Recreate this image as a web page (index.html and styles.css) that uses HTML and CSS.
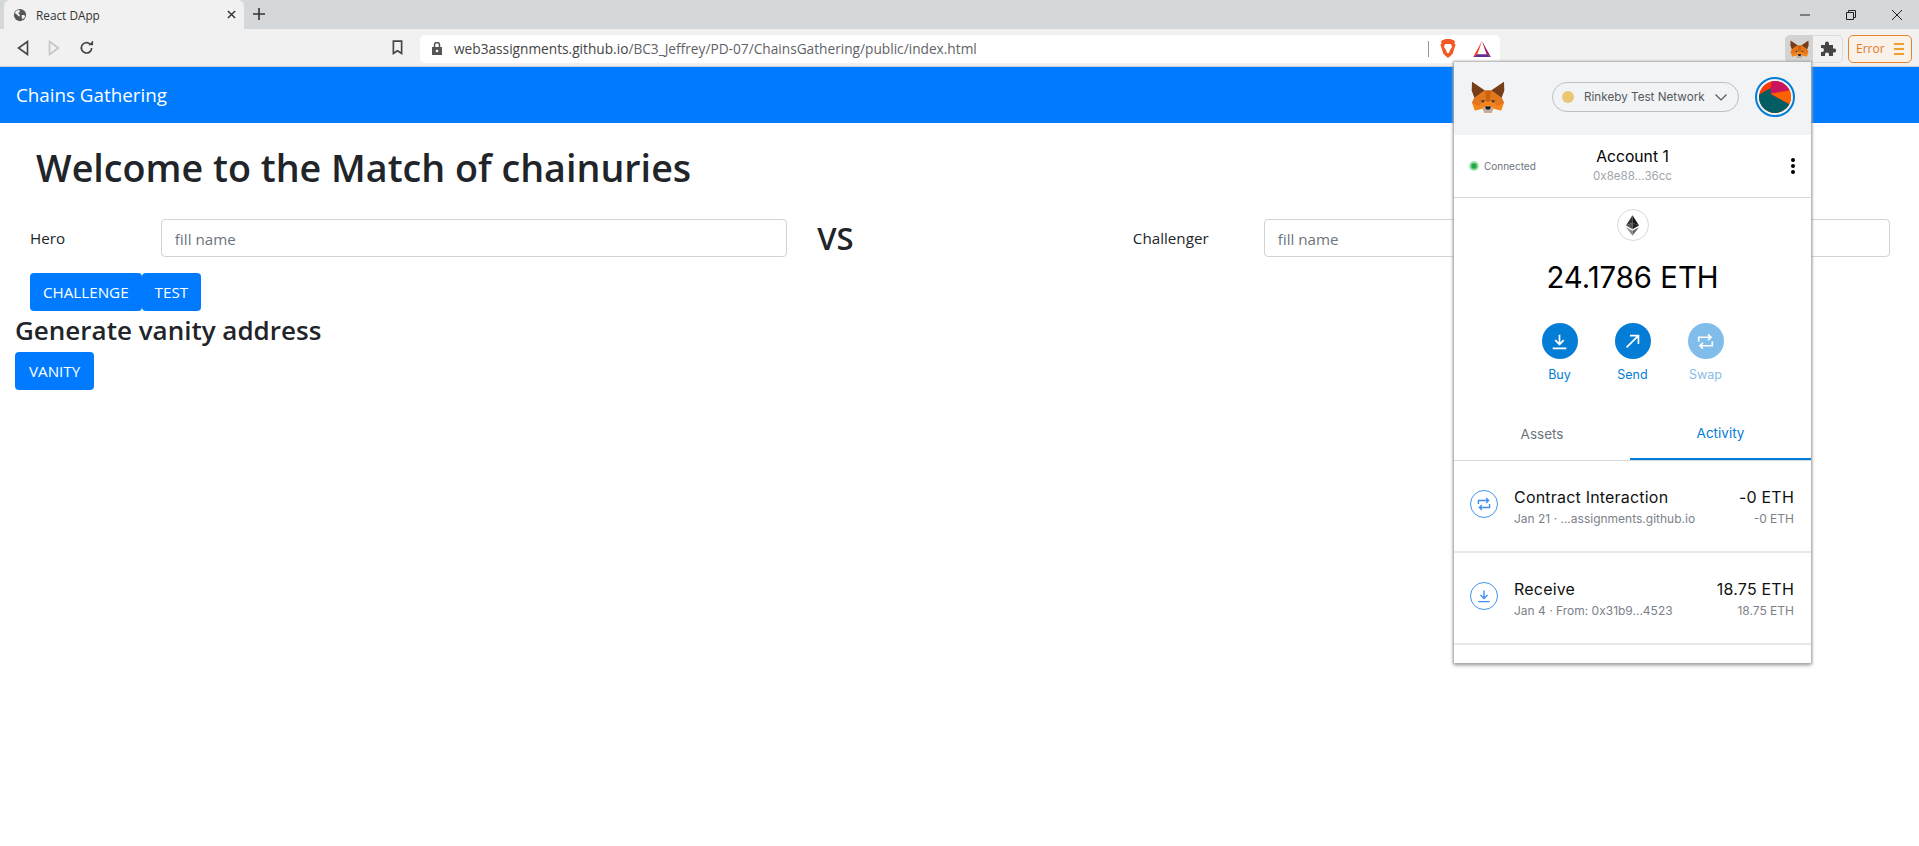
FILE: index.html
```html
<!DOCTYPE html>
<html lang="en">
<head>
<meta charset="utf-8">
<title>React DApp</title>
<link rel="stylesheet" href="styles.css">
</head>
<body>
<svg class="defs" width="0" height="0" aria-hidden="true">
  <symbol id="fox" viewBox="0 0 100 94">
    <polygon fill="#f6851b" points="10,50 26,38 41,28 59,28 74,38 90,50 97,64 89,87 66,81 60,93 40,93 34,81 11,87 3,64"/>
    <polygon fill="#763d16" points="3,2 41,28 26,38 10,50 2,28"/>
    <polygon fill="#763d16" points="97,2 59,28 74,38 90,50 98,28"/>
    <polygon fill="#e4761b" points="26,38 41,28 44,60 30,66 10,50"/>
    <polygon fill="#e4761b" points="74,38 59,28 56,60 70,66 90,50"/>
    <polygon fill="#cd6116" points="41,28 59,28 56,60 44,60"/>
    <polygon fill="#e4751f" points="3,64 10,50 30,66 24,74"/>
    <polygon fill="#e4751f" points="97,64 90,50 70,66 76,74"/>
    <polygon fill="#233447" points="28,58 40,56 36,64"/>
    <polygon fill="#233447" points="72,58 60,56 64,64"/>
    <polygon fill="#f6851b" points="11,87 24,74 34,81"/>
    <polygon fill="#f6851b" points="89,87 76,74 66,81"/>
    <polygon fill="#c0ad9e" points="34,81 40,93 60,93 66,81 60,74 40,74"/>
    <polygon fill="#161616" points="41,75 59,75 55,84 45,84"/>
  </symbol>
  <symbol id="swap" viewBox="0 0 20 20">
    <path fill="none" stroke="currentColor" stroke-width="2" d="M2 10V5h14M13 1.500L16.500 5 13 8.500M18 10v5H4M7 11.500L3.500 15 7 18.500"/>
  </symbol>
  <symbol id="down" viewBox="0 0 20 20">
    <path fill="none" stroke="currentColor" stroke-width="2" d="M10 2v11M5 8.500l5 5 5-5M2 18h16"/>
  </symbol>
</svg>

<header class="tabstrip">
  <div class="tab">
    <svg class="globe" viewBox="0 0 16 16"><circle cx="8" cy="8" r="7" fill="#555"/><path fill="#f1f1f1" d="M4 3l3-1 1 2-2 2 2 2-1 2-3-3-2-1zM10 8l3 0 1 2-3 3-1-2z"/></svg>
    <span class="tab-title">React DApp</span>
    <svg class="tab-x" viewBox="0 0 10 10"><path d="M1 1l8 8M9 1l-8 8" stroke="#333" stroke-width="1.600"/></svg>
  </div>
  <svg class="new-tab" viewBox="0 0 12 12"><path d="M6 0v12M0 6h12" stroke="#333" stroke-width="1.600"/></svg>
  <div class="window-controls">
    <svg viewBox="0 0 10 10"><path d="M0 5h10" stroke="#222"/></svg>
    <svg viewBox="0 0 10 10"><path fill="none" stroke="#222" d="M.5 2.500h7v7h-7zM2.500 2.500v-2h7v7h-2"/></svg>
    <svg viewBox="0 0 10 10"><path d="M0 0l10 10M10 0L0 10" stroke="#222"/></svg>
  </div>
</header>

<div class="toolbar">
  <div class="nav-buttons">
    <svg viewBox="0 0 12 16"><path fill="none" stroke="#444" stroke-width="1.600" d="M10.500 1.500v13L1.500 8z"/></svg>
    <svg viewBox="0 0 12 16"><path fill="none" stroke="#c4c4c4" stroke-width="1.600" d="M1.500 1.500v13l9-6.500z"/></svg>
    <svg viewBox="0 0 16 16"><path fill="none" stroke="#444" stroke-width="1.800" d="M13.500 8.500a5.500 5.500 0 1 1-1.800-4.200"/><path fill="#444" d="M10 5.500h5v-5z"/></svg>
  </div>
  <svg class="bookmark" viewBox="0 0 12 16"><path fill="none" stroke="#444" stroke-width="1.800" d="M1.500 1h9v13.500L6 11.500l-4.500 3z"/></svg>
  <div class="omnibox">
    <svg class="lock" viewBox="0 0 10 13"><path fill="#555" d="M0 5h10v8H0z"/><path fill="none" stroke="#555" stroke-width="1.500" d="M2.500 5V3a2.500 2.500 0 0 1 5 0v2"/><circle cx="5" cy="9" r="1.300" fill="#fff"/></svg>
    <span class="url"><span class="url-host">web3assignments.github.io</span>/BC3_Jeffrey/PD-07/ChainsGathering/public/index.html</span>
    <span class="omni-sep"></span>
    <svg class="brave" viewBox="0 0 16 19"><path fill="#f15a22" d="M3 1l2.500-1h5L13 1l2 1-.500 2 1 2-3 9-4.500 4-4.500-4-3-9 1-2-.500-2z"/><path fill="#fff" d="M5 5h6l1 3-2 3-1 3H7l-1-3-2-3z"/></svg>
    <svg class="bat" viewBox="0 0 20 18"><polygon fill="#ff4724" points="10,0 0,18 5,15"/><polygon fill="#9e1f63" points="10,0 20,18 15,15"/><polygon fill="#662d91" points="0,18 20,18 15.500,15 4.500,15"/><polygon fill="#fff" points="10,5 15,14 5,14"/></svg>
  </div>
  <div class="ext-group">
    <div class="ext-fox"><svg class="fox-small"><use href="#fox"/></svg></div>
    <svg class="puzzle" viewBox="0 0 16 16"><path fill="#444" d="M1 4h4V2.500a2 2 0 0 1 4 0V4h4v3.500h1.200a2 2 0 0 1 0 4H13V15H9v-1.500a2 2 0 0 0-4 0V15H1v-4h1a2 2 0 0 0 0-4H1z"/></svg>
  </div>
  <div class="error-chip"><span>Error</span><span class="menu-lines"><i></i><i></i><i></i></span></div>
</div>

<nav class="navbar"><a class="brand">Chains Gathering</a></nav>

<main class="page">
  <h1 class="title">Welcome to the Match of chainuries</h1>
  <div class="fight-row">
    <label class="fight-label">Hero</label>
    <input class="fight-input" placeholder="fill name">
    <h2 class="versus">VS</h2>
    <label class="fight-label">Challenger</label>
    <input class="fight-input" placeholder="fill name">
  </div>
  <div class="button-row">
    <button class="btn">CHALLENGE</button><button class="btn">TEST</button>
  </div>
  <h3 class="subtitle">Generate vanity address</h3>
  <button class="btn btn-wide">VANITY</button>
</main>

<aside class="wallet">
  <div class="wallet-head">
    <svg class="fox-large"><use href="#fox"/></svg>
    <div class="network"><span class="network-dot"></span><span class="network-name">Rinkeby Test Network</span>
      <svg class="chevron" viewBox="0 0 12 7"><path fill="none" stroke="#555" stroke-width="1.200" d="M.5.500L6 6 11.500.500"/></svg></div>
    <div class="avatar"><svg viewBox="0 0 32 32"><rect width="32" height="32" fill="#f93a06"/><polygon fill="#c9155f" points="12.700,0 32,0 32,9 11,12.700"/><polygon fill="#fb6200" points="12,12.700 32,9.500 32,24"/><polygon fill="#035e64" points="0,13.700 11.700,7 11.700,13 32,24.300 32,32 0,32"/></svg></div>
  </div>
  <div class="account-row">
    <div class="connected"><span class="connected-dot"></span>Connected</div>
    <div class="account"><div class="account-name">Account 1</div><div class="account-addr">0x8e88...36cc</div></div>
    <div class="kebab"><i></i><i></i><i></i></div>
  </div>
  <div class="balance-block">
    <div class="eth-badge"><svg viewBox="0 0 16 25"><polygon fill="#343434" points="8,0 0,12.500 8,9"/><polygon fill="#141414" points="8,0 16,12.500 8,9"/><polygon fill="#555" points="0,12.500 8,17 8,9"/><polygon fill="#222" points="16,12.500 8,17 8,9"/><polygon fill="#8c8c8c" points="0,14.500 8,25 8,19"/><polygon fill="#636363" points="16,14.500 8,25 8,19"/></svg></div>
    <div class="balance">24.1786 ETH</div>
    <div class="actions">
      <div class="action"><span class="action-circle"><svg><use href="#down"/></svg></span>Buy</div>
      <div class="action"><span class="action-circle"><svg viewBox="0 0 20 20"><path fill="none" stroke="currentColor" stroke-width="2" d="M3 17L17 3M7 3h10v10"/></svg></span>Send</div>
      <div class="action action-off"><span class="action-circle"><svg><use href="#swap"/></svg></span>Swap</div>
    </div>
  </div>
  <div class="tabs"><div class="wallet-tab">Assets</div><div class="wallet-tab wallet-tab-on">Activity</div></div>
  <div class="activity">
    <svg class="activity-icon" viewBox="0 0 28 28"><circle cx="14" cy="14" r="13.500" fill="none" stroke="#3f93ea"/><svg x="7" y="7" width="14" height="14"><use href="#swap" color="#3f8ef0"/></svg></svg>
    <div class="activity-main"><div class="activity-title">Contract Interaction</div><div class="activity-sub">Jan 21 · ...assignments.github.io</div></div>
    <div class="activity-amount"><div class="activity-title">-0 ETH</div><div class="activity-sub">-0 ETH</div></div>
  </div>
  <div class="activity">
    <svg class="activity-icon" viewBox="0 0 28 28"><circle cx="14" cy="14" r="13.500" fill="none" stroke="#3f93ea"/><svg x="7" y="7" width="14" height="14"><use href="#down" color="#3f8ef0"/></svg></svg>
    <div class="activity-main"><div class="activity-title">Receive</div><div class="activity-sub">Jan 4 · From: 0x31b9...4523</div></div>
    <div class="activity-amount"><div class="activity-title">18.75 ETH</div><div class="activity-sub">18.75 ETH</div></div>
  </div>
</aside>
</body>
</html>
```
FILE: styles.css
```css
* { box-sizing: border-box; }
html, body { margin: 0; height: 100%; overflow: hidden; }
body { font-family: "Open Sans", "Noto Sans", sans-serif; color: #212529; background: #fff; font-size: 15.200px; }
.defs { position: absolute; }

.tabstrip { height: 29px; background: #d5d8db; display: flex; align-items: flex-end; position: relative; }
.tab { width: 240px; height: 29px; margin-left: 4px; background: #f1f1f1; border-radius: 6px 6px 0 0; display: flex; align-items: center; padding: 0 8px 0 9px; }
.globe { width: 14px; height: 14px; }
.tab-title { flex: 1; margin-left: 9px; font: 11.800px "Open Sans", sans-serif; color: #333; }
.tab-x { width: 9px; height: 9px; }
.new-tab { width: 12px; height: 12px; margin: 0 0 9px 9px; }
.window-controls { margin-left: auto; align-self: stretch; display: flex; align-items: center; gap: 36px; padding: 0 17px 0 0; }
.window-controls svg { width: 10px; height: 10px; }

.toolbar { height: 38px; background: #f1f1f1; border-bottom: 1px solid #cdcdcd; display: flex; align-items: center; }
.nav-buttons { display: flex; align-items: center; gap: 19px; margin-left: 17px; }
.nav-buttons svg { width: 12px; height: 16px; }
.nav-buttons svg:last-child { width: 15px; height: 15px; }
.bookmark { width: 11px; height: 15px; margin-left: 298px; }
.omnibox { width: 1080px; height: 28px; margin: 2px 0 0 17px; background: #fff; border-radius: 5px; display: flex; align-items: center; padding-left: 12px; }
.lock { width: 10px; height: 13px; }
.url { margin-left: 12px; width: 974px; font: 13.700px "Open Sans", sans-serif; color: #5f6368; white-space: nowrap; }
.url-host { color: #444; }
.omni-sep { width: 1px; height: 16px; background: #999; margin-right: 11px; }
.brave { width: 16px; height: 19px; }
.bat { width: 18px; height: 16px; margin-left: 17px; }
.ext-group { width: 58px; height: 28px; margin: 2px 0 0 285px; display: flex; align-items: center; border: 1px solid #dcdcdc; border-radius: 5px; }
.ext-fox { width: 28px; height: 28px; margin: -1px 0 -1px -1px; background: #d3d3d3; border-radius: 5px 0 0 5px; display: flex; align-items: center; justify-content: center; }
.fox-small { width: 19px; height: 18px; }
.puzzle { width: 16px; height: 16px; margin-left: 7px; }
.error-chip { width: 64px; height: 28px; margin: 2px 0 0 5px; background: #faf1e9; border: 1px solid #e8852c; border-radius: 5px; display: flex; align-items: center; justify-content: space-between; padding: 0 7px; font: 12px "Open Sans", sans-serif; color: #e07a1f; }
.menu-lines { display: flex; flex-direction: column; gap: 3px; }
.menu-lines i { display: block; width: 10px; height: 2px; background: #f0a030; }

.navbar { height: 56px; background: #007bff; display: flex; align-items: center; padding-left: 16px; }
.brand { color: #fff; font-size: 18.800px; }

.page { padding: 0 15px; }
.title { margin: 19px 0 0 21px; font-size: 37.700px; line-height: 52px; font-weight: 600; }
.fight-row { display: flex; align-items: center; margin-top: 25px; padding: 0 14px 0 15px; }
.fight-label { width: 131px; }
.fight-input { width: 627px; height: 38px; border: 1px solid #ced4da; border-radius: 4px; padding: 1px 13px 0; font: 15.200px "Open Sans", sans-serif; }
.fight-input::placeholder { color: #6c757d; }
.versus { width: 316px; margin: 0 0 0 30px; font-size: 31px; line-height: 38px; font-weight: 600; }
.button-row { margin: 16px 0 0 15px; display: flex; }
.btn { height: 38px; padding: 0 13px; border: 0; border-radius: 4px; background: #007bff; color: #fff; font: 15.200px "Open Sans", sans-serif; }
.btn-wide { padding: 0 14px; }
.subtitle { margin: 0 0 3px; font-size: 26px; line-height: 38px; font-weight: 600; }

.wallet { position: absolute; left: 1454px; top: 62px; width: 357px; height: 601px; background: #fff; box-shadow: 0 0 2px 1px #aaa, 0 2px 4px #999; font-family: Inter, "Open Sans", sans-serif; display: flex; flex-direction: column; }
.wallet-head { height: 73px; background: #f2f3f4; display: flex; align-items: center; padding: 0 16px 0 17px; }
.fox-large { width: 34px; height: 32px; margin-top: -3px; }
.network { width: 187px; height: 30px; margin: -3px 0 0 47px; border: 1px solid #bbc0c5; border-radius: 15px; display: flex; align-items: center; padding: 0 11px 0 9px; font-size: 11.700px; color: #535a61; }
.network-dot { width: 12px; height: 12px; border-radius: 50%; background: #ebc775; }
.network-name { flex: 1; margin-left: 10px; white-space: nowrap; }
.chevron { width: 12px; height: 7px; }
.avatar { width: 40px; height: 40px; margin: -3px 0 0 16px; border: 2px solid #037dd6; border-radius: 50%; padding: 2px; }
.avatar svg { display: block; width: 32px; height: 32px; border-radius: 50%; }
.account-row { height: 63px; border-bottom: 1px solid #d6d9dc; display: grid; grid-template-columns: 1fr auto 1fr; align-items: center; padding: 0 16px; }
.connected { display: flex; align-items: center; gap: 6px; font-size: 10px; color: #6a737d; white-space: nowrap; }
.connected-dot { width: 8px; height: 8px; border-radius: 50%; background: #28a745; box-shadow: 0 0 0 1px #a4e6b4; border: 1px solid #a4e6b4; }
.account { text-align: center; margin-top: -1px; }
.account-name { font-size: 15.700px; line-height: 22px; color: #000; }
.account-addr { font-size: 11.600px; line-height: 17px; color: #9fa6ae; }
.kebab { justify-self: end; width: 4px; display: flex; flex-direction: column; gap: 2px; }
.kebab i { display: block; width: 4px; height: 4px; border-radius: 50%; background: #000; }
.balance-block { height: 210px; display: flex; flex-direction: column; align-items: center; padding-top: 11px; }
.eth-badge { width: 32px; height: 32px; border: 1px solid #d6d9dc; border-radius: 50%; display: flex; align-items: center; justify-content: center; }
.eth-badge svg { width: 13px; height: 21px; }
.balance { margin-top: 15px; font-size: 29.300px; line-height: 44px; color: #000; white-space: nowrap; }
.actions { margin-top: 23px; display: flex; gap: 18px; }
.action { width: 55px; display: flex; flex-direction: column; align-items: center; gap: 8px; font-size: 12.500px; line-height: 16px; color: #037dd6; }
.action-circle { width: 36px; height: 36px; border-radius: 50%; background: #037dd6; color: #fff; display: flex; align-items: center; justify-content: center; }
.action-circle svg { width: 17px; height: 17px; }
.action-off { opacity: .5; }
.tabs { flex: none; display: grid; grid-template-columns: 176px 1fr; height: 53px; border-bottom: 1px solid #d6d9dc; }
.wallet-tab { display: flex; align-items: center; justify-content: center; font-size: 13.500px; color: #6a737d; height: 52px; }
.wallet-tab-on { color: #037dd6; border-bottom: 2px solid #037dd6; }
.activity { flex: none; height: 92px; border-bottom: 2px solid #e7e8e9; display: flex; align-items: flex-start; padding: 25px 17px 0 16px; }
.activity-icon { width: 28px; height: 28px; margin: 4px 16px 0 0; flex: none; }
.activity-main { flex: 1; }
.activity-amount { text-align: right; }
.activity-title { font-size: 16px; line-height: 22px; letter-spacing: .2px; color: #111; }
.activity-sub { margin-top: 2px; font-size: 12px; line-height: 18px; color: #7b8289; }
```
